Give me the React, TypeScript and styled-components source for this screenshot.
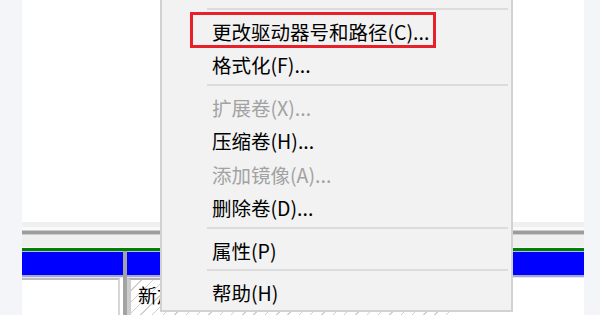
import React from 'react';
import styled, { createGlobalStyle } from 'styled-components';

const GlobalStyle = createGlobalStyle`
  html, body {
    margin: 0;
    padding: 0;
    background: #ffffff;
  }
  body {
    width: 600px;
    height: 315px;
    overflow: hidden;
    font-family: 'Noto Sans CJK SC', 'Noto Sans', sans-serif;
  }
`;

type MenuEntry = { label: string; disabled?: boolean; marked?: boolean } | 'sep';

// the menu runs on above the top edge, so it starts at the separator
const menuEntries: MenuEntry[] = [
  'sep',
  { label: '更改驱动器号和路径(C)...', marked: true },
  { label: '格式化(F)...' },
  'sep',
  { label: '扩展卷(X)...', disabled: true },
  { label: '压缩卷(H)...' },
  { label: '添加镜像(A)...', disabled: true },
  { label: '删除卷(D)...' },
  'sep',
  { label: '属性(P)' },
  'sep',
  { label: '帮助(H)' },
];

const App = () => {
  return (
    <>
      <GlobalStyle />
      <Page>
        <SideStrip />
        <Workspace>
          <UpperPane />
          <Sash />
          <DiskRow>
            <Volume $width={101}>
              <VolumeHeader />
              <VolumeBody>
                <PlainFrame />
              </VolumeBody>
            </Volume>
            <Volume>
              <VolumeHeader />
              <VolumeBody>
                <HatchedFrame>
                  <VolumeName>新加卷</VolumeName>
                </HatchedFrame>
              </VolumeBody>
            </Volume>
          </DiskRow>

          <ContextMenu>
            {menuEntries.map((entry, i) =>
              entry === 'sep' ? (
                <Separator key={i} />
              ) : (
                <MenuItem key={i} $disabled={entry.disabled}>
                  {entry.label}
                  {entry.marked && <Highlight />}
                </MenuItem>
              ),
            )}
          </ContextMenu>
        </Workspace>
        <SideStrip $width={16} />
      </Page>
    </>
  );
};

export default App;

const Page = styled.div`
  display: flex;
  width: 600px;
  height: 315px;
  overflow: hidden;
`;

const SideStrip = styled.div<{ $width?: number }>`
  width: ${p => p.$width ?? 22}px;
  flex-shrink: 0;
  background: #f4f5f9;
`;

const Workspace = styled.div`
  position: relative;
  flex: 1;
  display: flex;
  flex-direction: column;
  background: #ffffff;
  overflow: hidden;
`;

const UpperPane = styled.div`
  height: 222px;
  flex-shrink: 0;
  background: #ffffff;
`;

const Sash = styled.div`
  height: 26px;
  flex-shrink: 0;
  background: linear-gradient(
    to bottom,
    #f0f0f0 0 5px,
    #fafafa 5px 8px,
    #cccccc 8px 9px,
    #9c9c9c 9px 12px,
    #cccccc 12px 13px,
    #efefef 13px 25px,
    #f8f8f8 25px 26px
  );
`;

const DiskRow = styled.div`
  flex: 1;
  display: flex;
  gap: 4px;
  border-top: 3px solid #008000;
  background: #a3a3a3;
`;

const Volume = styled.div<{ $width?: number }>`
  display: flex;
  flex-direction: column;
  ${p => (p.$width ? `width: ${p.$width}px; flex-shrink: 0;` : 'flex: 1;')}
`;

const VolumeHeader = styled.div`
  height: 23px;
  background: #0000ff;
  border-top: 1px solid #b8b8f4;
  border-bottom: 2px solid #a4a4de;
`;

const VolumeBody = styled.div`
  flex: 1;
  display: flex;
  background: #ffffff;
  border-top: 1px solid #e6e6e6;
`;

const PlainFrame = styled.div`
  flex: 1;
  margin-right: 3px;
  border-top: 2px solid #bdbdbd;
  border-right: 2px solid #d6d6d6;
  background: #ffffff;
`;

const HatchedFrame = styled.div`
  width: 325px;
  border-top: 2px solid #b0b0b0;
  border-left: 4px solid #cdcdcd;
  background: repeating-linear-gradient(
    135deg,
    #ffffff 0 7px,
    #cfcfcf 7px 8px
  );
`;

const VolumeName = styled.div`
  padding: 2px 0 0 7px;
  font-size: 19px;
  line-height: 26px;
  color: #000000;
`;

const ContextMenu = styled.div`
  position: absolute;
  left: 138px;
  top: 0;
  width: 353px;
  box-sizing: border-box;
  display: flex;
  flex-direction: column;
  padding: 4px 0 2px;
  background: #f2f2f2;
  border: 2px solid #d2d2d2;
  border-top: none;
`;

const MenuItem = styled.div<{ $disabled?: boolean }>`
  position: relative;
  height: 33.5px;
  box-sizing: border-box;
  display: flex;
  align-items: center;
  padding: 3px 0 0 50px;
  font-size: 19.5px;
  white-space: nowrap;
  color: ${p => (p.$disabled ? '#a2a2a2' : '#000000')};
`;

const Highlight = styled.span`
  position: absolute;
  left: 28px;
  top: -1px;
  width: 246px;
  height: 36px;
  box-sizing: border-box;
  border: 3px solid #e8202a;
  pointer-events: none;
`;

const Separator = styled.div`
  height: 9px;
  display: flex;
  align-items: center;
  padding: 0 3px 0 45px;

  &::after {
    content: '';
    flex: 1;
    height: 2px;
    background: #dcdcdc;
  }
`;
